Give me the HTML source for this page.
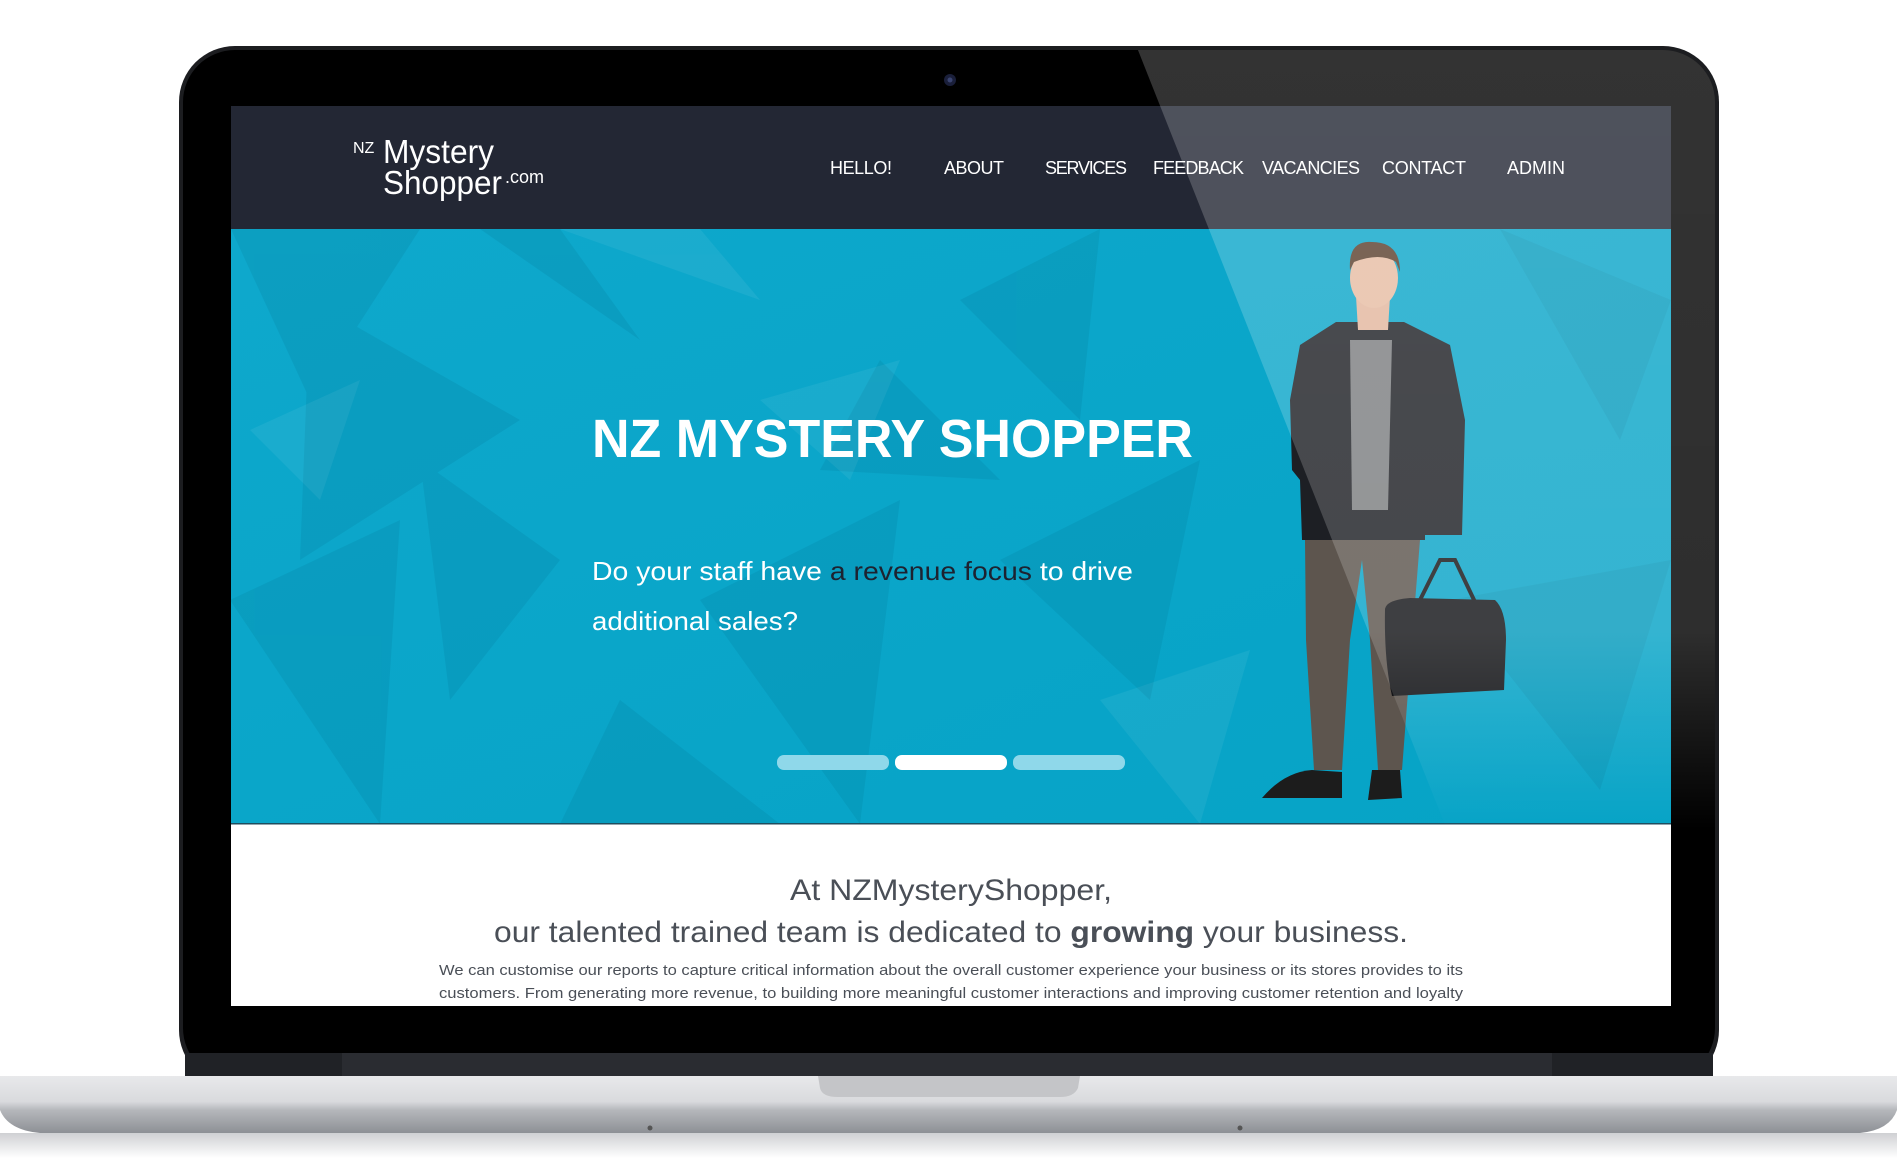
<!DOCTYPE html>
<html><head><meta charset="utf-8"><style>
html,body{margin:0;padding:0;background:#fff;width:1897px;height:1162px;overflow:hidden}
svg{display:block}
text{font-family:"Liberation Sans",sans-serif}
</style></head><body>
<svg width="1897" height="1162" viewBox="0 0 1897 1162" xmlns="http://www.w3.org/2000/svg">
<defs>
<linearGradient id="base" x1="0" y1="0" x2="0" y2="1">
<stop offset="0" stop-color="#e8e9eb"/><stop offset="0.45" stop-color="#d9dadd"/><stop offset="0.6" stop-color="#b5b7bb"/><stop offset="1" stop-color="#8d9095"/></linearGradient>
<linearGradient id="refl" x1="0" y1="0" x2="0" y2="1"><stop offset="0" stop-color="#cfd0d3"/><stop offset="1" stop-color="#fff"/></linearGradient>
<linearGradient id="hero" x1="0" y1="0" x2="1" y2="1"><stop offset="0" stop-color="#0ea8cc"/><stop offset="1" stop-color="#06a3c6"/></linearGradient>
<linearGradient id="gl" x1="0" y1="0" x2="0" y2="1"><stop offset="0" stop-color="#fff" stop-opacity="0.2"/><stop offset="0.75" stop-color="#fff" stop-opacity="0.18"/><stop offset="1" stop-color="#fff" stop-opacity="0"/></linearGradient>
<clipPath id="scr"><rect x="231" y="106" width="1440" height="900"/></clipPath>
<clipPath id="lid"><rect x="183" y="50" width="1532" height="1030" rx="52"/></clipPath>
</defs>
<rect x="179" y="46" width="1540" height="1040" rx="56" fill="#1c1d20"/>
<rect x="183" y="50" width="1532" height="1030" rx="52" fill="#000"/>
<circle cx="950" cy="80" r="6" fill="#1a1f3a"/><circle cx="950" cy="80" r="2.5" fill="#3a4470"/>
<rect x="185" y="1053" width="1528" height="24" fill="#202226"/>
<rect x="342" y="1053" width="1210" height="24" fill="#2a2c31"/>
<g clip-path="url(#scr)">
<rect x="231" y="106" width="1440" height="124" fill="#232734"/>
<rect x="231" y="229" width="1440" height="595" fill="url(#hero)"/>
<g fill="#00627f" opacity="0.13">
<polygon points="231,229 420,229 310,400"/><polygon points="310,300 520,420 300,560"/>
<polygon points="480,229 640,340 560,229"/><polygon points="230,600 400,520 380,824"/>
<polygon points="700,600 900,500 860,824"/><polygon points="960,300 1100,229 1080,420"/>
<polygon points="620,700 780,824 560,824"/><polygon points="1000,560 1200,460 1150,700"/>
<polygon points="420,460 560,560 450,700"/><polygon points="880,360 1000,480 820,470"/>
<polygon points="1500,229 1671,300 1620,440"/><polygon points="1450,600 1671,560 1600,790"/>
</g>
<g fill="#ffffff" opacity="0.06">
<polygon points="560,229 760,300 700,229"/><polygon points="250,430 360,380 320,500"/>
<polygon points="760,400 900,360 850,480"/><polygon points="1100,700 1250,650 1200,824"/>
</g>
<rect x="231" y="824" width="1440" height="182" fill="#fff"/>
<rect x="231" y="823" width="1440" height="1.5" fill="#1f4d5e"/>
<text x="353" y="153" font-size="16" fill="#fff">NZ</text>
<text x="383" y="163" font-size="33" fill="#fff" textLength="111" lengthAdjust="spacingAndGlyphs">Mystery</text>
<text x="383" y="194" font-size="33" fill="#fff" textLength="119" lengthAdjust="spacingAndGlyphs">Shopper</text>
<text x="505" y="183" font-size="18" fill="#fff">.com</text>
<g font-size="18" fill="#fff">
<text x="830" y="174" textLength="62">HELLO!</text>
<text x="944" y="174" textLength="60">ABOUT</text>
<text x="1045" y="174" textLength="82">SERVICES</text>
<text x="1153" y="174" textLength="91">FEEDBACK</text>
<text x="1262" y="174" textLength="98">VACANCIES</text>
<text x="1382" y="174" textLength="84">CONTACT</text>
<text x="1507" y="174" textLength="58">ADMIN</text>
</g>
<text x="592" y="457" font-size="54" font-weight="bold" fill="#fff" textLength="601" lengthAdjust="spacingAndGlyphs">NZ MYSTERY SHOPPER</text>
<text x="592" y="580" font-size="26" fill="#fff" textLength="541" lengthAdjust="spacingAndGlyphs">Do your staff have <tspan fill="#1d2230">a revenue focus</tspan> to drive</text>
<text x="592" y="630" font-size="26" fill="#fff" textLength="206" lengthAdjust="spacingAndGlyphs">additional sales?</text>
<rect x="777" y="755" width="112" height="15" rx="7" fill="#8fd8ea"/>
<rect x="895" y="755" width="112" height="15" rx="7" fill="#fff"/>
<rect x="1013" y="755" width="112" height="15" rx="7" fill="#8fd8ea"/>
<g>
<path d="M1305 540 L1420 540 L1412 640 L1402 770 L1378 770 L1370 640 L1362 560 L1350 640 L1342 770 L1314 770 L1306 640 Z" fill="#5d554e"/>
<path d="M1262 798 Q1284 772 1312 770 L1342 772 L1342 798 Z" fill="#1c1c1c"/>
<path d="M1372 770 L1400 770 L1402 798 L1368 800 Z" fill="#1c1c1c"/>
<path d="M1336 322 L1404 322 L1450 345 L1465 420 L1462 535 L1425 535 L1425 540 L1302 540 L1300 480 L1292 470 L1290 400 L1300 345 Z" fill="#1d1f24"/>
<path d="M1350 340 L1392 340 L1388 510 L1352 510 Z" fill="#7c7e80"/>
<path d="M1356 296 L1390 296 L1388 330 L1358 330 Z" fill="#e2b69e"/>
<ellipse cx="1374" cy="278" rx="24" ry="30" fill="#e6bca3"/>
<path d="M1350 270 Q1348 240 1372 242 Q1400 242 1400 272 L1396 262 Q1380 252 1354 262 Z" fill="#5a3f2d"/>
<path d="M1385 610 Q1385 600 1410 598 L1495 600 Q1506 610 1506 640 L1504 690 L1392 696 Q1384 660 1385 610 Z" fill="#141518"/>
<path d="M1420 600 L1440 560 L1455 560 L1475 602" fill="none" stroke="#141518" stroke-width="4"/>
</g>
</g>
<g clip-path="url(#lid)">
<polygon points="1134,40 1719,40 1719,830 1447,830" fill="url(#gl)"/>
</g>
<text x="951" y="900" font-size="30" fill="#4a4f57" text-anchor="middle" textLength="322" lengthAdjust="spacingAndGlyphs">At NZMysteryShopper,</text>
<text x="951" y="942" font-size="30" fill="#4a4f57" text-anchor="middle" textLength="914" lengthAdjust="spacingAndGlyphs">our talented trained team is dedicated to <tspan font-weight="bold">growing</tspan> your business.</text>
<text x="951" y="975" font-size="15" fill="#4a4f57" text-anchor="middle" textLength="1024" lengthAdjust="spacingAndGlyphs">We can customise our reports to capture critical information about the overall customer experience your business or its stores provides to its</text>
<text x="951" y="998" font-size="15" fill="#4a4f57" text-anchor="middle" textLength="1024" lengthAdjust="spacingAndGlyphs">customers. From generating more revenue, to building more meaningful customer interactions and improving customer retention and loyalty</text>
<path d="M0 1076 L1897 1076 L1897 1110 Q1890 1130 1860 1133 L40 1133 Q8 1130 0 1110 Z" fill="url(#base)"/>
<rect x="0" y="1133" width="1897" height="25" fill="url(#refl)"/>
<path d="M818 1076 L1080 1076 L1078 1088 Q1074 1097 1060 1097 L838 1097 Q822 1097 820 1088 Z" fill="#c4c5c8"/>
<circle cx="650" cy="1128" r="2.5" fill="#555"/><circle cx="1240" cy="1128" r="2.5" fill="#555"/>
</svg>
</body></html>
